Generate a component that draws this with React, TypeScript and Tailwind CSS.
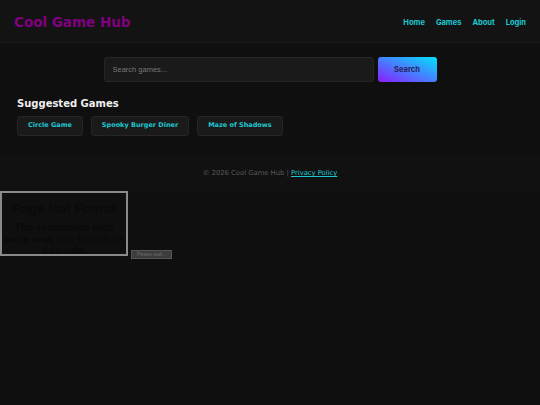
import React from 'react';

const games = ['Circle Game', 'Spooky Burger Diner', 'Maze of Shadows'];
const nav = ['Home', 'Games', 'About', 'Login'];

const App: React.FC = () => {
  return (
    <div className="min-h-[405px] bg-[#0f0f0f] font-['DejaVu_Sans',sans-serif]">
      <header className="flex h-[43px] items-center justify-between border-b border-[#1a1a1a] bg-[#131313] px-[14px] pt-[3px]">
        <h1 className="text-[13.5px] font-bold text-[#800080]">Cool Game Hub</h1>
        <nav className="flex gap-[11px] font-['Inter',sans-serif] text-[7.5px] font-bold text-[#1ec8d2]">
          {nav.map((n) => (
            <a key={n} href="#">{n}</a>
          ))}
        </nav>
      </header>

      <main className="px-[17px]">
        <div className="flex justify-center gap-[4px] pt-[14px]">
          <input
            type="text"
            placeholder="Search games..."
            className="h-[25px] w-[270px] rounded-[3px] border border-[#262626] bg-[#1a1a1a] px-[8px] font-['Liberation_Sans',sans-serif] text-[7.5px] text-[#ccc] placeholder:text-[#777] focus:outline-none"
          />
          <button className="h-[25px] w-[59px] rounded-[3px] bg-[linear-gradient(to_top_right,#8a1dff,#00e4ff)] font-['Inter',sans-serif] text-[7.5px] font-bold text-[#2a1f5e]">
            Search
          </button>
        </div>

        <h2 className="mt-[14px] text-[10px] font-bold text-[#eeeeee]">Suggested Games</h2>
        <div className="mt-[5px] flex gap-[8px]">
          {games.map((g) => (
            <button
              key={g}
              className="h-[20px] rounded-[3px] border border-[#262626] bg-[#1a1a1a] px-[10px] text-[6.5px] font-bold text-[#1ec8d2]"
            >
              {g}
            </button>
          ))}
        </div>
      </main>

      <footer className="mt-[20px] flex h-[35px] items-center justify-center bg-[#111111] text-[6.8px] text-[#5a5a5a]">
        <span>
          © 2026 Cool Game Hub |{' '}
          <a href="#" className="text-[#1ec8d2] underline">Privacy Policy</a>
        </span>
      </footer>

      <div className="flex items-end gap-[3px]">
        <div className="h-[65px] w-[128px] overflow-hidden border-2 border-[#8a8a8a] text-center font-['Liberation_Sans',sans-serif] font-bold text-[#0a0a0a]">
          <div className="mt-[8px] text-[13.5px] leading-[16px]">Page Not Found</div>
          <div className="mt-[5px] text-[11px] leading-[11.5px]">The requested web page was not found on this site.</div>
        </div>
        <div className="mb-[-3px] flex h-[9px] w-[41px] items-center justify-center border border-[#555] bg-[#3c3c3c] font-['Liberation_Sans',sans-serif] text-[5px] text-[#6a6a6a]">
          Please wait...
        </div>
      </div>
    </div>
  );
};

export default App;
